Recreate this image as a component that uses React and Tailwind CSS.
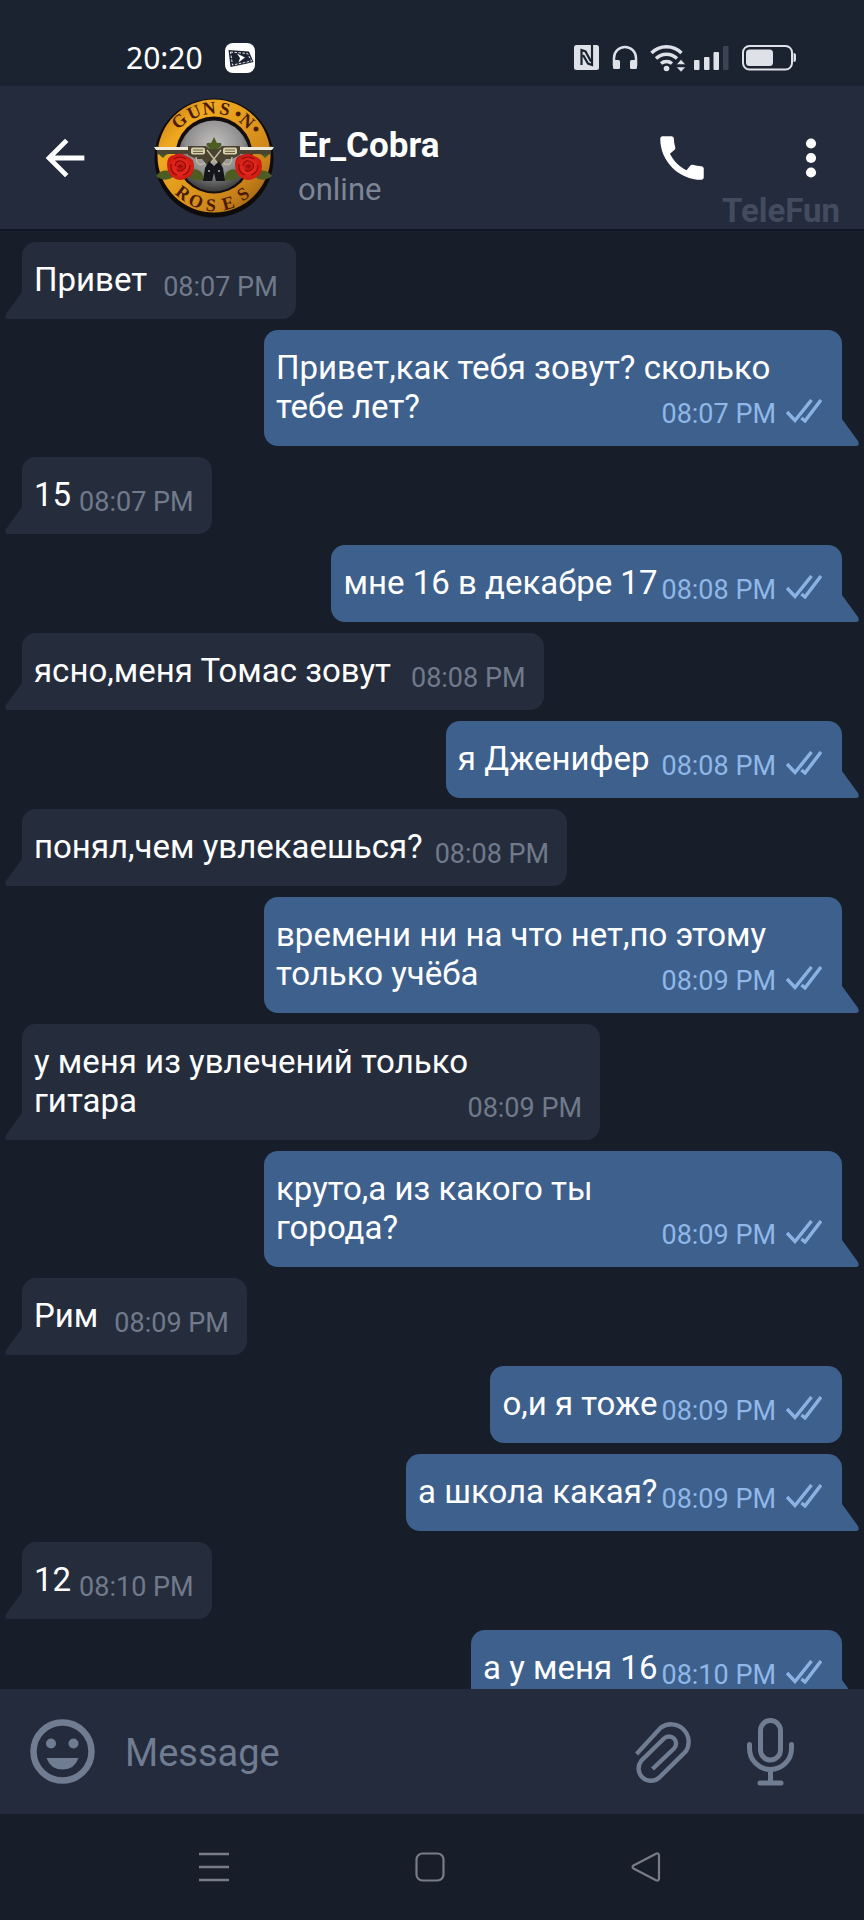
import React from "react";

// gap is the space between the last line of text and the time
const messages = [
    {id: 1, lines: ["Привет"], time: "08:07 PM", gap: "gap-4"},
    {id: 2, lines: ["Привет,как тебя зовут? сколько", "тебе лет?"], time: "08:07 PM", out: true},
    {id: 3, lines: ["15"], time: "08:07 PM", gap: "gap-2"},
    {id: 4, lines: ["мне 16 в декабре 17"], time: "08:08 PM", out: true, gap: "gap-1"},
    {id: 5, lines: ["ясно,меня Томас зовут"], time: "08:08 PM", gap: "gap-5"},
    {id: 6, lines: ["я Дженифер"], time: "08:08 PM", out: true, gap: "gap-3"},
    {id: 7, lines: ["понял,чем увлекаешься?"], time: "08:08 PM", gap: "gap-3"},
    {id: 8, lines: ["времени ни на что нет,по этому", "только учёба"], time: "08:09 PM", out: true},
    {id: 9, lines: ["у меня из увлечений только", "гитара"], time: "08:09 PM"},
    {id: 10, lines: ["круто,а из какого ты", "города?"], time: "08:09 PM", out: true},
    {id: 11, lines: ["Рим"], time: "08:09 PM", gap: "gap-4"},
    {id: 12, lines: ["о,и я тоже"], time: "08:09 PM", out: true, gap: "gap-1", noTail: true},
    {id: 13, lines: ["а школа какая?"], time: "08:09 PM", out: true, gap: "gap-1"},
    {id: 14, lines: ["12"], time: "08:10 PM", gap: "gap-2"},
    {id: 15, lines: ["а у меня 16"], time: "08:10 PM", out: true, gap: "gap-1"},
];

const topLetters = [
    ["G", -35, -37, -41], ["U", -20, -46, -24], ["N", -5, -50, -6], ["S", 11, -49, 12],
    ["•", 24, -44, 28], ["N", 33, -37, 41], ["•", 42, -29, 54],
];

const bottomLetters = [
    ["R", -31, 35, 38], ["O", -18, 43, 22], ["S", -3, 47, 4], ["E", 14, 45, -16], ["S", 29, 36, -36],
];

const Avatar = () => (
    <svg className="size-[120px] shrink-0" viewBox="-60 -60 120 120" role="img" aria-label="Er_Cobra">
        <defs>
            <linearGradient id="gold" x1="0" y1="0" x2="1" y2="1">
                <stop offset="0" stopColor="#b8700f"/>
                <stop offset="0.25" stopColor="#f0a91f"/>
                <stop offset="0.5" stopColor="#e09a1c"/>
                <stop offset="0.75" stopColor="#c9821a"/>
                <stop offset="1" stopColor="#8a5210"/>
            </linearGradient>
            <radialGradient id="steel" cx="0.5" cy="0.35" r="0.65">
                <stop offset="0" stopColor="#c4c3c2"/>
                <stop offset="0.6" stopColor="#908f8f"/>
                <stop offset="1" stopColor="#3a393b"/>
            </radialGradient>
            <radialGradient id="rose">
                <stop offset="0" stopColor="#a50d0a"/>
                <stop offset="0.45" stopColor="#e5281d"/>
                <stop offset="1" stopColor="#cc1a12"/>
            </radialGradient>
        </defs>
        <circle r="59.5" fill="#0f0b0a"/>
        <circle cy="-2" r="56.5" fill="url(#gold)"/>
        <circle cy="-3" r="38.500" fill="#140f0e"/>
        <circle cy="-2" r="35.5" fill="url(#steel)"/>
        <g fill="#4a1a0a" fontFamily="'Liberation Serif', serif" fontSize="18" fontWeight="700" textAnchor="middle">
            {topLetters.concat(bottomLetters).map(([letter, x, y, angle], i) => (
                <text key={i} transform={`translate(${x} ${y}) rotate(${angle})`} y="6">{letter}</text>
            ))}
        </g>
        <g fill="#4c5c22">
            <path d="M-47-4q-5-8-11-8q2 9 7 12zM47-4q5-8 11-8q-2 9-7 12z"/>
            <path d="M-44 13q-9-2-14 5q9 7 17 1zM44 13q9-2 14 5q-9 7-17 1z"/>
            <path d="M-24 14q5-6 12 1l2 7q-9 2-15-3zM24 14q-5-6-12 1l-2 7q9 2 15-3z"/>
            <path d="M-7-12q-2-4 4-3l3-6l3 6q6-1 4 3l-4 4h-6z"/>
        </g>
        {/* crossed pistols */}
        <path d="M-60-11h36v3h-34zM60-11h-36v3h34z" fill="#efeadb"/>
        <path d="M-57-8h33l3 4h-24q-6 1-12 0zM57-8h-33l-3 4h24q6 1 12 0z" fill="#4a4331"/>
        <path d="M-26-12h18l4 3h8l4-3h18v9l-8 4l-6 0l-5 6l-7-5l-7 5l-5-6l-6 0l-8-4z" fill="#4b4332"/>
        <rect x="-23" y="-10.500" width="14" height="7" rx="2" fill="#d8cfac"/>
        <rect x="9" y="-10.500" width="14" height="7" rx="2" fill="#d8cfac"/>
        <path d="M-21-8h10M-21-5.500h10M11-8h10M11-5.500h10" stroke="#6b6043" strokeWidth="1"/>
        <path d="M-7-8L4 6M7-8L-4 6M-18-1q1 11 9 6M18-1q-1 11-9 6" stroke="#c5bc9c" strokeWidth="1.400" fill="none"/>
        <path d="M-5 3L0 8l5-5l4 7l2 13h-9l-2-8l-2 8h-9l2-13z" fill="#14151b"/>
        <circle cx="-5" cy="13" r="0.900" fill="#c9cbd0"/>
        <circle cx="5" cy="13" r="0.900" fill="#c9cbd0"/>
        {[-34, 34].map((x) => (
            <g key={x} transform={`translate(${x} 9)`}>
                <path d="M-13-3q0-8 7-9q7-3 12 1q8 2 8 10q0 9-7 12q-7 4-13 0q-7-4-7-14z" fill="url(#rose)"/>
                <path d="M-5-1q1-6 6-5q6 2 4 7q-4 5-8 2M-9-3q-1 9 6 11M10-2q0 8-7 10M-6-8q6-4 12 0M-2 0q2-3 4 0"
                      stroke="#8f0a08" strokeWidth="1.200" fill="none"/>
            </g>
        ))}
    </svg>
);

const Tail = ({out}) => (
    <svg className={"absolute bottom-0 h-[27px] w-[18px] " + (out ? "-right-[17px] text-[#3e608d]" : "-left-[17px] text-[#252d3d]")}
         viewBox="0 0 18 27" fill="currentColor" aria-hidden="true">
        <path d={out ? "M0 0h1l16 22q2 5-2 5H0z" : "M18 0h-1l-16 22q-2 5 2 5H18z"}/>
    </svg>
);

const Checks = () => (
    <svg className="mb-1.5 h-6 w-9" viewBox="0 0 36 24" fill="none" stroke="#8ab3e3" strokeWidth="3.400" aria-label="read">
        <path d="M1 13l8 8.500L25.500 1M15.500 19l3.500 3L35 1"/>
    </svg>
);

const Message = ({message}) => {
    const {lines, time, out, gap, noTail} = message;
    const lastLine = lines[lines.length - 1];
    let bubble = "relative max-w-full rounded-t-[14px] pt-[18px] pb-4 pl-3 ";
    bubble += out ? "bg-[#3e608d] pr-5 " : "bg-[#252d3d] pr-[18px] ";
    if (lines.length > 1) {
        bubble += "w-[578px] ";
    }
    if (noTail) {
        bubble += "rounded-b-[14px]";
    } else {
        bubble += out ? "rounded-bl-[14px]" : "rounded-br-[14px]";
    }

    return (
        <li className={out ? "flex justify-end" : "flex justify-start"}>
            <div className={bubble}>
                {lines.slice(0, -1).map((line) => (
                    <p key={line} className="text-[33px] leading-[39px] text-white">{line}</p>
                ))}
                <div className={"flex justify-between " + (gap || "")}>
                    <p className="pb-1 text-[33px] leading-[39px] whitespace-nowrap text-white">{lastLine}</p>
                    <div className="flex items-center gap-2.5 self-end">
                        <time className={"text-[27px] leading-8 whitespace-nowrap " + (out ? "text-[#8fb8e8]" : "text-[#707a8b]")}>{time}</time>
                        {out && <Checks/>}
                    </div>
                </div>
                {!noTail && <Tail out={out}/>}
            </div>
        </li>
    );
};

const StatusBar = () => (
    <div className="flex h-[86px] shrink-0 items-center bg-[#1b2331] pt-[30px] pr-[68px] pl-[126px]">
        <span className="font-['Noto_Sans',sans-serif] text-[30px] leading-9 text-white">20:20</span>
        <svg className="ml-[22px] size-[30px]" viewBox="0 0 30 30" aria-hidden="true">
            <rect width="30" height="30" rx="8" fill="#fff"/>
            <path d="M3.500 7L24 8.500L28.500 19L20 21L5.500 24z" fill="#1b2331"/>
            <path d="M5.500 9L22.500 10.500L26.500 18L19.500 19.500L7.500 22z" stroke="#fff" strokeWidth="0.900" strokeDasharray="2.500 1.500" fill="none"/>
            <path d="M12 10.500l8 4l-6.500 5l1.500-4.500z" fill="#fff"/>
        </svg>
        <div className="ml-auto flex items-center gap-3 text-[#dfe1e9]">
            <svg className="size-[26px]" viewBox="0 0 26 26" aria-label="NFC">
                <rect width="25" height="25" rx="2.500" fill="currentColor"/>
                <path d="M7.500 20V5l4 1.500l5.500 10M18 0v20l-4-1.500L9 10" stroke="#1b2331" strokeWidth="2.200" fill="none"/>
            </svg>
            <svg className="size-[26px]" viewBox="0 0 26 26" aria-label="Headphones">
                <path d="M2 21v-8a11 11 0 0 1 22 0v8" stroke="currentColor" strokeWidth="2.500" fill="none"/>
                <rect x="1" y="15" width="7" height="9" rx="1.500" fill="currentColor"/>
                <rect x="18" y="15" width="7" height="9" rx="1.500" fill="currentColor"/>
            </svg>
            <div className="flex items-center gap-2">
                <svg className="h-7 w-9" viewBox="0 0 36 28" fill="none" stroke="currentColor" aria-label="Wi-Fi">
                    <path d="M1.500 9a21 21 0 0 1 30 0M6 14.500a15 15 0 0 1 21 0M11 19.500a8.500 8.500 0 0 1 11 0" strokeWidth="3.400"/>
                    <circle cx="16.500" cy="24.500" r="2.800" fill="currentColor" stroke="none"/>
                    <path d="M26.500 20.500h9l-4.500-5zM26.500 23h9l-4.500 5z" fill="currentColor" stroke="#1b2331" strokeWidth="0.500"/>
                </svg>
                <svg className="h-[26px] w-9" viewBox="0 0 36 26" fill="currentColor" aria-label="Signal">
                    <rect y="15" width="5.500" height="10" rx="1"/>
                    <rect x="10" y="12" width="5.500" height="13" rx="1"/>
                    <rect x="19.500" y="7" width="5.500" height="18" rx="1"/>
                    <rect x="29" y="1" width="5.500" height="24" rx="1" fill="#3b4452"/>
                </svg>
            </div>
            <svg className="h-[26px] w-[54px]" viewBox="0 0 54 26" fill="currentColor" aria-label="Battery">
                <rect x="1" y="1" width="49" height="23.500" rx="6.500" fill="none" stroke="currentColor" strokeWidth="2"/>
                <rect x="4" y="4.500" width="27" height="16.500" rx="3.500"/>
                <path d="M51.500 8q2.500 0 2.500 2v5q0 2-2.500 2z"/>
            </svg>
        </div>
    </div>
);

const Header = () => (
    <header className="relative flex h-[145px] shrink-0 items-center border-b-2 border-[#101625] bg-[#232b3c] pl-9 text-white">
        <button type="button" aria-label="Back">
            <svg className="size-[58px]" viewBox="0 0 24 24" fill="currentColor">
                <path d="M20 11H7.830l5.590-5.590L12 4l-8 8 8 8 1.410-1.410L7.830 13H20v-2z"/>
            </svg>
        </button>
        <div className="ml-[60px]"><Avatar/></div>
        <div className="ml-6 grow pt-5">
            <h1 className="text-[35px] leading-10 font-bold">Er_Cobra</h1>
            <p className="mt-1 text-[31px] leading-10 text-[#7d8697]">online</p>
        </div>
        <button type="button" aria-label="Call">
            <svg className="size-[58px]" viewBox="0 0 24 24" fill="currentColor">
                <path d="M20.010 15.380c-1.230 0-2.420-.2-3.530-.560-.350-.120-.740-.030-1.010.240l-1.570 1.970c-2.830-1.350-5.480-3.900-6.890-6.830l1.950-1.660c.270-.280.350-.670.240-1.020-.370-1.110-.560-2.300-.560-3.530 0-.540-.450-.990-.990-.990H4.190C3.650 3 3 3.240 3 3.990 3 13.280 10.730 21 20.010 21c.710 0 .990-.630.990-1.180v-3.450c0-.540-.450-.990-.990-.990z"/>
            </svg>
        </button>
        <button type="button" aria-label="More options" className="mr-6 ml-[71px]">
            <svg className="size-[58px]" viewBox="0 0 24 24" fill="currentColor">
                <circle cx="12" cy="6" r="2.100"/>
                <circle cx="12" cy="12" r="2.100"/>
                <circle cx="12" cy="18" r="2.100"/>
            </svg>
        </button>
        <span className="absolute right-6 bottom-0 text-[33px] leading-9 font-bold text-[#434c5f]">TeleFun</span>
    </header>
);

const Composer = () => (
    <form className="flex h-[125px] shrink-0 items-center bg-[#232b3c] pr-[69px] pl-[30px] text-[#707c92]">
        <button type="button" aria-label="Emoji">
            <svg className="size-[65px]" viewBox="0 0 65 65" fill="currentColor">
                <circle cx="32.500" cy="32.500" r="29" fill="none" stroke="currentColor" strokeWidth="6.500"/>
                <circle cx="21" cy="24.500" r="5"/>
                <circle cx="43.500" cy="24.500" r="5"/>
                <path d="M16.500 39h32q-4 11.500-16 11.500t-16-11.500z"/>
            </svg>
        </button>
        <input type="text" aria-label="Message" placeholder="Message"
               className="ml-[30px] min-w-0 grow pt-0.5 text-[38px] leading-[48px] text-white outline-none placeholder:text-[#707c92]"/>
        <button type="button" aria-label="Attach file">
            <svg className="h-16 w-[58px]" viewBox="0 0 58 64" fill="none" stroke="currentColor" strokeWidth="4.400">
                <path d="M1.500 34L25.600 7.800A17.500 17.500 0 0 1 50.400 31.900L23.700 58A12.300 12.300 0 0 1 6.300 40.800L29 18.500A7 7 0 0 1 39 28.500L17.500 49"/>
            </svg>
        </button>
        <button type="button" aria-label="Record voice message" className="ml-[54px]">
            <svg className="h-[68px] w-12" viewBox="0 0 48 68" fill="none" stroke="currentColor" strokeWidth="5" strokeLinecap="round">
                <rect x="13.500" y="2.500" width="20" height="39.500" rx="10"/>
                <path d="M2.500 26.500v4a21 21 0 0 0 42 0v-4M23.500 52v13M13 65h21"/>
            </svg>
        </button>
    </form>
);

const NavBar = () => (
    <nav className="grid h-[106px] shrink-0 grid-cols-3 items-center justify-items-center pr-[110px] pl-[106px] text-[#777c88]">
        <button type="button" aria-label="Recent apps">
            <svg className="size-[30px]" viewBox="0 0 30 30" stroke="currentColor" strokeWidth="2.400">
                <path d="M0 2h30M0 15h30M0 28h30"/>
            </svg>
        </button>
        <button type="button" aria-label="Home">
            <svg className="size-[30px]" viewBox="0 0 30 30" fill="none" stroke="currentColor" strokeWidth="2.200">
                <rect x="1.500" y="1.500" width="27" height="27" rx="6"/>
            </svg>
        </button>
        <button type="button" aria-label="Back to previous app">
            <svg className="size-[30px]" viewBox="0 0 30 30" fill="none" stroke="currentColor" strokeWidth="2.200" strokeLinejoin="round">
                <path d="M2.500 13.500L25 1.700q3-1 3 2v22.600q0 3-3 2L2.500 16.500q-2-1.500 0-3z"/>
            </svg>
        </button>
    </nav>
);

const App = () => (
    <div className="flex h-screen w-full flex-col overflow-hidden bg-[#171d29] font-[Roboto,'Liberation_Sans',sans-serif]">
        <StatusBar/>
        <Header/>
        <main className="min-h-0 flex-1 overflow-hidden">
            <ul className="flex flex-col gap-[11px] px-[22px] pt-[11px]">
                {messages.map((message) => <Message key={message.id} message={message}/>)}
            </ul>
        </main>
        <Composer/>
        <NavBar/>
    </div>
);

export default App;
